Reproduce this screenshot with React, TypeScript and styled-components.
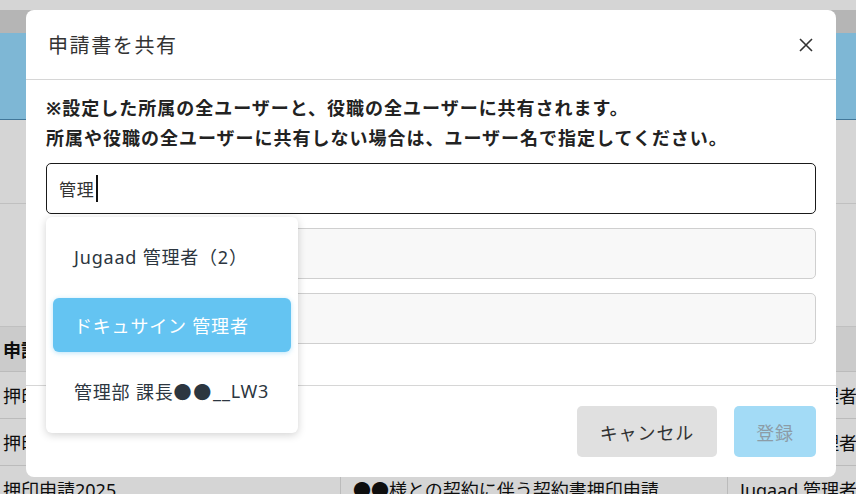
import { Fragment } from "react";
import styled, { createGlobalStyle } from "styled-components";

const GlobalStyle = createGlobalStyle`
  html, body {
    margin: 0;
    padding: 0;
    width: 856px;
    height: 494px;
    overflow: hidden;
    background: #fff;
    font-family: "Noto Sans", "Noto Sans CJK JP", sans-serif;
  }
`;

const rows = [
  { title: "押印申請2023", subject: "●●様との契約に伴う契約書押印申請", owner: "Jugaad 管理者" },
  { title: "押印申請2024", subject: "●●様との契約に伴う契約書押印申請", owner: "Jugaad 管理者" },
  { title: "押印申請2025", subject: "●●様との契約に伴う契約書押印申請", owner: "Jugaad 管理者" },
];

const options = [
  { label: "Jugaad 管理者（2）", active: false },
  { label: "ドキュサイン 管理者", active: true },
  { label: "管理部 課長●●__LW3", active: false },
];

const Page = styled.div`
  position: relative;
  width: 856px;
  height: 494px;
  overflow: hidden;
  color: #111;
`;

const TopStrip = styled.div`
  height: 10px;
  background: #fff;
`;

const TabBar = styled.div`
  height: 23px;
  background: #d9d9d9;
`;

const Banner = styled.div`
  height: 86px;
  background: #97dcff;
  border-bottom: 1px solid #4f8fb8;
`;

const Section = styled.div<{ $h: number }>`
  height: ${(p) => p.$h}px;
  border-bottom: 1px solid #e6e6e6;
`;

const Table = styled.div`
  display: grid;
  grid-template-columns: 340px 387px 1fr;
  font-size: 18px;
`;

const Cell = styled.div<{ $head?: boolean; $first?: boolean }>`
  height: ${(p) => (p.$head ? 44 : 46)}px;
  display: flex;
  align-items: center;
  padding-left: ${(p) => (p.$first ? 3 : 12)}px;
  white-space: nowrap;
  overflow: hidden;
  font-weight: ${(p) => (p.$head ? 700 : 400)};
  background: ${(p) => (p.$head ? "#f4f4f4" : "#fff")};
  border-bottom: 1px solid #e0e0e0;
  border-left: ${(p) => (p.$first ? "none" : "1px solid #e0e0e0")};
`;

const Backdrop = styled.div`
  position: absolute;
  inset: 0;
  background: rgba(0, 0, 0, 0.165);
  display: flex;
  align-items: flex-start;
`;

const Modal = styled.div`
  margin: 10px 0 0 26px;
  width: 810px;
  height: 467px;
  background: #fff;
  border-radius: 8px;
  display: flex;
  flex-direction: column;
  color: #333;
  letter-spacing: 0.05em;
`;

const Header = styled.div`
  height: 69px;
  display: flex;
  align-items: center;
  justify-content: space-between;
  padding: 0 23px 0 22px;
  border-bottom: 1px solid #d6d6d6;
`;

const Title = styled.h2`
  margin: 0;
  font-size: 20px;
  font-weight: 400;
  letter-spacing: 0.08em;
  color: #333;
`;

const CloseButton = styled.button`
  border: none;
  background: none;
  padding: 0;
  width: 14px;
  height: 14px;
  display: flex;
  cursor: pointer;
`;

const Body = styled.div`
  padding: 13px 20px 0;
  height: 292px;
  display: flex;
  flex-direction: column;
`;

const Notice = styled.p`
  margin: 0 0 10px;
  font-size: 18px;
  font-weight: 700;
  line-height: 30px;
  color: #222;
  letter-spacing: 0.055em;
`;

const Fields = styled.div`
  display: flex;
  flex-direction: column;
  gap: 14px;
`;

const FieldWrap = styled.div`
  position: relative;
`;

const TextField = styled.div<{ $focused?: boolean }>`
  box-sizing: border-box;
  height: 51px;
  border-radius: 5px;
  border: 1px solid ${(p) => (p.$focused ? "#1a1a1a" : "#cfcfcf")};
  background: ${(p) => (p.$focused ? "#fff" : "#f8f8f8")};
  display: flex;
  align-items: center;
  padding-left: 12px;
  font-size: 17px;
  color: #333;
`;

const Caret = styled.span`
  display: inline-block;
  width: 2px;
  height: 27px;
  margin-left: 1px;
  background: #111;
`;

const Menu = styled.ul`
  position: absolute;
  top: 54px;
  left: 0;
  width: 252px;
  height: 216px;
  box-sizing: border-box;
  margin: 0;
  padding: 12px 7px;
  list-style: none;
  background: #fff;
  border-radius: 6px;
  box-shadow: 0 2px 8px rgba(0, 0, 0, 0.18);
  display: flex;
  flex-direction: column;
  gap: 13px;
  z-index: 2;
`;

const Option = styled.li<{ $active?: boolean }>`
  height: 54px;
  flex-shrink: 0;
  display: flex;
  align-items: center;
  padding-left: 21px;
  margin: ${(p) => (p.$active ? "2px 0 -1px" : "0")};
  border-radius: 6px;
  font-size: 18px;
  white-space: nowrap;
  color: ${(p) => (p.$active ? "#fff" : "#2c3640")};
  background: ${(p) => (p.$active ? "#64c4f2" : "transparent")};
  box-shadow: ${(p) => (p.$active ? "0 1px 5px rgba(100, 196, 242, 0.45)" : "none")};
`;

const Dots = styled.span`
  font-family: "Noto Sans CJK JP", sans-serif;
  letter-spacing: 0.1em;
`;

const Footer = styled.div`
  flex: 1;
  border-top: 1px solid #d6d6d6;
  display: flex;
  justify-content: flex-end;
  align-items: flex-start;
  gap: 17px;
  padding: 20px 20px 0;
`;

const Button = styled.button<{ $primary?: boolean }>`
  height: 51px;
  padding: 0 ${(p) => (p.$primary ? 22 : 23)}px;
  border: none;
  border-radius: 5px;
  font-family: inherit;
  font-size: 18px;
  letter-spacing: 0.05em;
  color: ${(p) => (p.$primary ? "#8c9ca7" : "#333")};
  background: ${(p) => (p.$primary ? "#a3dbf6" : "#e0e0e0")};
  cursor: pointer;
`;

// full-width dots come from the CJK font, like in the app
const renderLabel = (text: string) =>
  text.split(/(●+)/).map((part, i) =>
    part.startsWith("●") ? <Dots key={i}>{part}</Dots> : <Fragment key={i}>{part}</Fragment>
  );

export default function App() {
  return (
    <>
      <GlobalStyle />
      <Page>
        <TopStrip />
        <TabBar />
        <Banner />
        <Section $h={83} />
        <Section $h={122} />
        <Table>
          <Cell $head $first>申請書名</Cell>
          <Cell $head>件名</Cell>
          <Cell $head>作成者</Cell>
          {rows.map((r) => (
            <Fragment key={r.title}>
              <Cell $first>{r.title}</Cell>
              <Cell>{r.subject}</Cell>
              <Cell>{r.owner}</Cell>
            </Fragment>
          ))}
        </Table>

        <Backdrop>
          <Modal>
            <Header>
              <Title>申請書を共有</Title>
              <CloseButton aria-label="閉じる">
                <svg width="14" height="14" viewBox="0 0 14 14">
                  <path d="M1 1 L13 13 M13 1 L1 13" stroke="#333" strokeWidth="1.6" fill="none" />
                </svg>
              </CloseButton>
            </Header>
            <Body>
              <Notice>
                ※設定した所属の全ユーザーと、役職の全ユーザーに共有されます。
                <br />
                所属や役職の全ユーザーに共有しない場合は、ユーザー名で指定してください。
              </Notice>
              <Fields>
                <FieldWrap>
                  <TextField $focused>
                    管理
                    <Caret />
                  </TextField>
                  <Menu>
                    {options.map((o) => (
                      <Option key={o.label} $active={o.active}>
                        {renderLabel(o.label)}
                      </Option>
                    ))}
                  </Menu>
                </FieldWrap>
                <TextField />
                <TextField />
              </Fields>
            </Body>
            <Footer>
              <Button>キャンセル</Button>
              <Button $primary>登録</Button>
            </Footer>
          </Modal>
        </Backdrop>
      </Page>
    </>
  );
}
